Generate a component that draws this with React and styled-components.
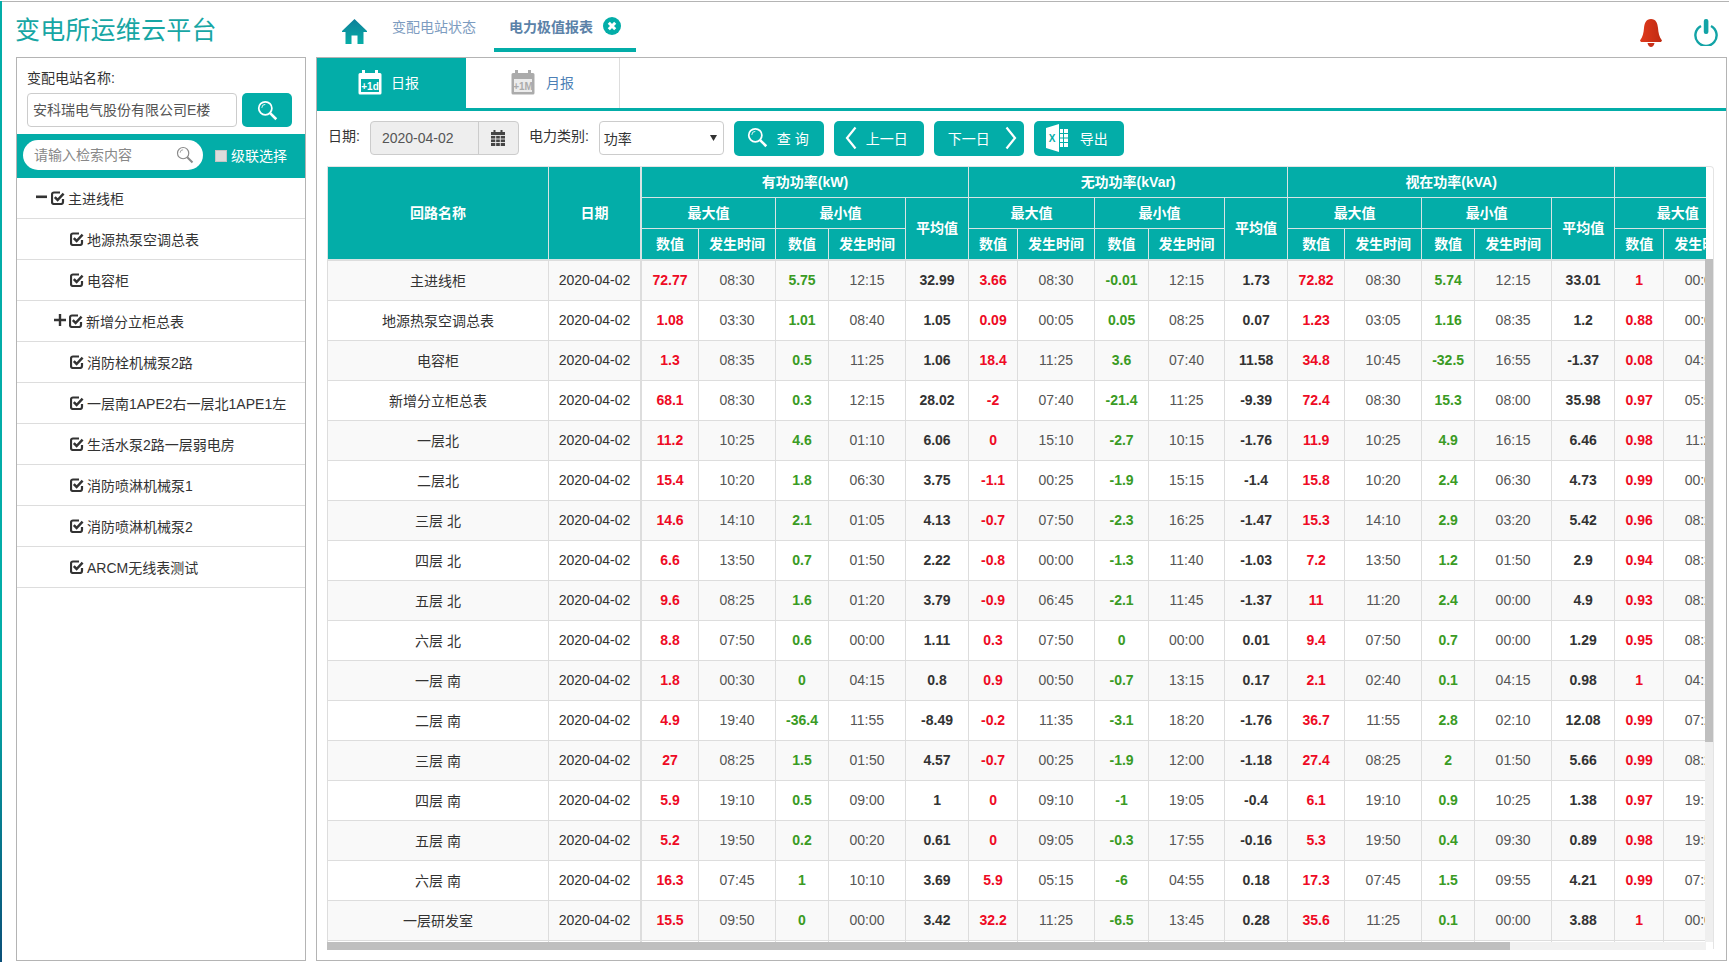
import React from 'react';
import styled, { createGlobalStyle } from 'styled-components';

const TEAL = '#03ada8';
const LINE = '#dddddd';
const FRAME = '#b4b4b4';
const SANS = '"Liberation Sans", "Noto Sans CJK SC", sans-serif';

const Global = createGlobalStyle`
  html, body { margin: 0; padding: 0; background: #fff; overflow: hidden; }
  body { font-family: ${SANS}; font-size: 14px; color: #333; }
  * { box-sizing: border-box; }
`;

const Page = styled.div`
  width: 1729px;
  height: 962px;
  padding: 1px 0 0 0;
  display: flex;
  overflow: hidden;
`;
const Edge = styled.div`
  width: 2px;
  flex: none;
  background: linear-gradient(#03ada8 0%, #03ada8 70%, #0b4f78 100%);
`;
const Shell = styled.div`
  flex: 1;
  min-width: 0;
  border-top: 1px solid ${FRAME};
  display: flex;
  flex-direction: column;
`;

const TopBar = styled.header`
  height: 55px;
  flex: none;
  display: flex;
  align-items: flex-start;
  padding-left: 13px;
  padding-right: 11px;
`;
const Title = styled.h1`
  margin: 0;
  width: 327px;
  flex: none;
  height: 52px;
  line-height: 52px;
  font-size: 25px;
  font-weight: 400;
  letter-spacing: 0.2px;
  color: #17a6a4;
  font-family: "Noto Sans CJK SC", sans-serif;
`;
const HomeLink = styled.a`
  display: block;
  width: 25px;
  height: 25px;
  margin-top: 17px;
  flex: none;
`;
const NavTab = styled.div`
  height: 50px;
  padding: 2px 15px 0;
  margin-left: ${p => p.$ml || 0}px;
  border-bottom: 4px solid ${p => (p.$active ? TEAL : 'transparent')};
  display: flex;
  align-items: center;
  gap: 10px;
  font-size: 14px;
  white-space: nowrap;
  font-weight: ${p => (p.$active ? 700 : 400)};
  color: ${p => (p.$active ? '#5b82a8' : '#7d9cc0')};
  font-family: "Noto Sans CJK SC", sans-serif;
`;
const HeadIcons = styled.div`
  margin-left: auto;
  display: flex;
  align-items: flex-start;
  gap: 32px;
  padding-top: 17px;
`;

const Body = styled.main`
  flex: none;
  height: 904px;
  display: flex;
  gap: 10px;
  padding-left: 14px;
`;

const SidePanel = styled.aside`
  width: 290px;
  flex: none;
  border: 1px solid ${FRAME};
  display: flex;
  flex-direction: column;
`;
const StationBox = styled.div`
  height: 76px;
  flex: none;
  padding: 10px 10px 0;
`;
const FieldLabel = styled.div`
  height: 22px;
  line-height: 20px;
  font-size: 14px;
  color: #333;
  white-space: nowrap;
`;
const StationRow = styled.div`
  display: flex;
  gap: 5px;
  margin-top: 3px;
`;
const TextInput = styled.input`
  width: 210px;
  height: 34px;
  border: 1px solid #ccc;
  border-radius: 4px;
  padding: 0 5px 3px;
  font: 14px ${SANS};
  color: #555;
  background: #fff;
  outline: none;
`;
const IconButton = styled.button`
  width: 50px;
  height: 34px;
  border: 0;
  border-radius: 5px;
  background: ${TEAL};
  display: flex;
  align-items: center;
  justify-content: center;
  padding: 0;
`;
const FilterStrip = styled.div`
  height: 44px;
  flex: none;
  background: ${TEAL};
  display: flex;
  align-items: center;
  padding: 0 0 2px 6px;
`;
const SearchPill = styled.div`
  width: 180px;
  height: 30px;
  border-radius: 15px;
  background: #fff;
  display: flex;
  align-items: center;
  padding: 0 9px 0 9px;
`;
const PillInput = styled.input`
  flex: 1;
  min-width: 0;
  border: 0;
  outline: none;
  background: transparent;
  font: 14px ${SANS};
  color: #555;
  &::placeholder { color: #888; opacity: 1; }
`;
const CascadeLabel = styled.label`
  margin-left: 12px;
  display: flex;
  align-items: center;
  gap: 4px;
  color: #fff;
  font-size: 14px;
  white-space: nowrap;
`;
const GreyBox = styled.span`
  width: 12px;
  height: 12px;
  background: #dcdcdc;
  border: 1px solid #c4c4c4;
  display: block;
  margin-top: 2px;
`;
const TreeList = styled.ul`
  list-style: none;
  margin: 0;
  padding: 0;
`;
const TreeRow = styled.li`
  height: 41px;
  border-bottom: 1px solid ${LINE};
  display: flex;
  align-items: center;
  padding-left: ${p => p.$indent}px;
  gap: 3px;
  font-size: 14px;
  color: #333;
  white-space: nowrap;
`;
const Toggle = styled.span`
  width: 12px;
  display: block;
  flex: none;
`;

const MainPanel = styled.section`
  width: 1411px;
  flex: none;
  border: 1px solid ${FRAME};
`;
const ReportTabs = styled.div`
  height: 53px;
  display: flex;
  border-bottom: 3px solid ${TEAL};
`;
const ReportTab = styled.div`
  width: ${p => p.$w}px;
  display: flex;
  align-items: center;
  gap: ${p => (p.$active ? 9 : 11)}px;
  padding: 0 0 2px ${p => p.$pad}px;
  font-size: 14px;
  background: ${p => (p.$active ? TEAL : '#fff')};
  color: ${p => (p.$active ? '#fff' : '#4c7fb5')};
  border-right: ${p => (p.$active ? '0' : `1px solid ${LINE}`)};
`;
const Toolbar = styled.div`
  display: flex;
  align-items: flex-start;
  margin: 10px 0 0 11px;
  height: 35px;
  gap: 10px;
`;
const ToolLabel = styled.span`
  line-height: 31px;
  font-size: 14px;
  color: #333;
  white-space: nowrap;
`;
const DateGroup = styled.div`
  width: 149px;
  height: 34px;
  display: flex;
  border: 1px solid #ccc;
  border-radius: 4px;
  background: #eee;
  overflow: hidden;
`;
const DateValue = styled.div`
  width: 108px;
  line-height: 32px;
  padding-left: 11px;
  color: #555;
  border-right: 1px solid #ccc;
`;
const DateAddon = styled.div`
  flex: 1;
  display: flex;
  align-items: center;
  justify-content: center;
`;
const SelectBox = styled.div`
  width: 125px;
  height: 34px;
  border: 1px solid #ccc;
  border-radius: 4px;
  padding: 0 6px 0 4px;
  display: flex;
  align-items: center;
  justify-content: space-between;
  color: #333;
  background: #fff;
`;
const ActionButton = styled.button`
  width: 90px;
  height: 35px;
  border: 0;
  border-radius: 5px;
  background: ${TEAL};
  color: #fff;
  font: 14px ${SANS};
  padding: 0 0 2px ${p => p.$pl || 0}px;
  display: flex;
  align-items: center;
  gap: ${p => p.$gap || 8}px;
  letter-spacing: ${p => p.$track || 0}px;
  white-space: nowrap;
`;

const TableFrame = styled.div`
  position: relative;
  width: 1387px;
  height: 783px;
  margin: 10px 0 0 10px;
  border: 1px solid #e4e4e4;
  border-left: 0;
  border-bottom: 0;
  border-radius: 0 4px 0 0;
`;
const TableClip = styled.div`
  width: 1379px;
  height: 775px;
  overflow: hidden;
  display: flex;
  align-items: flex-start;
`;
const GridTable = styled.table`
  border-collapse: collapse;
  table-layout: fixed;
  flex: none;
  width: ${p => p.$w}px;
`;
const Col = styled.col`
  width: ${p => p.$w}px;
`;
const Th = styled.th`
  height: ${p => p.$h || 31}px;
  padding: 0 0 2px;
  background: ${TEAL};
  color: #fff;
  font-size: 14px;
  font-weight: 700;
  text-align: center;
  border: 1px solid #d8e4e4;
  border-top: 0;
  overflow: hidden;
  white-space: nowrap;
`;
const Tr = styled.tr`
  background: ${p => (p.$odd ? '#f9f9f9' : '#fff')};
`;
const Td = styled.td`
  height: 40px;
  padding: 0;
  text-align: center;
  border: 1px solid ${LINE};
  font-size: 14px;
  white-space: nowrap;
  overflow: hidden;
  color: ${p => (p.$tone === 'max' ? '#ee0a24' : p.$tone === 'min' ? '#3a9b24' : p.$tone === 'time' ? '#555' : '#333')};
  font-weight: ${p => (p.$tone && p.$tone !== 'time' ? 700 : 400)};
`;
const HeadDivider = styled.tr`
  background: #ddd;
`;
const DividerCell = styled.td`
  height: ${p => p.$h}px;
  padding: 0;
  border: 0;
`;
const VTrack = styled.div`
  position: absolute;
  right: 0;
  top: 92px;
  width: 8px;
  height: 683px;
  background: #efefef;
`;
const VThumb = styled.div`
  height: 483px;
  background: #bfbfbf;
`;
const HTrack = styled.div`
  position: absolute;
  left: 0;
  top: 775px;
  width: 1379px;
  height: 8px;
  background: #f1f1f1;
`;
const HThumb = styled.div`
  width: 1183px;
  height: 8px;
  background: #bfbfbf;
`;

const names = ['主进线柜','地源热泵空调总表','电容柜','新增分立柜总表','一层北','二层北','三层 北','四层 北','五层 北','六层 北','一层 南','二层 南','三层 南','四层 南','五层 南','六层 南','一层研发室'];

const rows = [
  '72.77 08:30 5.75 12:15 32.99 3.66 08:30 -0.01 12:15 1.73 72.82 08:30 5.74 12:15 33.01 1 00:00',
  '1.08 03:30 1.01 08:40 1.05 0.09 00:05 0.05 08:25 0.07 1.23 03:05 1.16 08:35 1.2 0.88 00:00',
  '1.3 08:35 0.5 11:25 1.06 18.4 11:25 3.6 07:40 11.58 34.8 10:45 -32.5 16:55 -1.37 0.08 04:50',
  '68.1 08:30 0.3 12:15 28.02 -2 07:40 -21.4 11:25 -9.39 72.4 08:30 15.3 08:00 35.98 0.97 05:50',
  '11.2 10:25 4.6 01:10 6.06 0 15:10 -2.7 10:15 -1.76 11.9 10:25 4.9 16:15 6.46 0.98 11:20',
  '15.4 10:20 1.8 06:30 3.75 -1.1 00:25 -1.9 15:15 -1.4 15.8 10:20 2.4 06:30 4.73 0.99 00:00',
  '14.6 14:10 2.1 01:05 4.13 -0.7 07:50 -2.3 16:25 -1.47 15.3 14:10 2.9 03:20 5.42 0.96 08:20',
  '6.6 13:50 0.7 01:50 2.22 -0.8 00:00 -1.3 11:40 -1.03 7.2 13:50 1.2 01:50 2.9 0.94 08:30',
  '9.6 08:25 1.6 01:20 3.79 -0.9 06:45 -2.1 11:45 -1.37 11 11:20 2.4 00:00 4.9 0.93 08:20',
  '8.8 07:50 0.6 00:00 1.11 0.3 07:50 0 00:00 0.01 9.4 07:50 0.7 00:00 1.29 0.95 08:30',
  '1.8 00:30 0 04:15 0.8 0.9 00:50 -0.7 13:15 0.17 2.1 02:40 0.1 04:15 0.98 1 04:10',
  '4.9 19:40 -36.4 11:55 -8.49 -0.2 11:35 -3.1 18:20 -1.76 36.7 11:55 2.8 02:10 12.08 0.99 07:20',
  '27 08:25 1.5 01:50 4.57 -0.7 00:25 -1.9 12:00 -1.18 27.4 08:25 2 01:50 5.66 0.99 08:20',
  '5.9 19:10 0.5 09:00 1 0 09:10 -1 19:05 -0.4 6.1 19:10 0.9 10:25 1.38 0.97 19:10',
  '5.2 19:50 0.2 00:20 0.61 0 09:05 -0.3 17:55 -0.16 5.3 19:50 0.4 09:30 0.89 0.98 19:50',
  '16.3 07:45 1 10:10 3.69 5.9 05:15 -6 04:55 0.18 17.3 07:45 1.5 09:55 4.21 0.99 07:50',
  '15.5 09:50 0 00:00 3.42 32.2 11:25 -6.5 13:45 0.28 35.6 11:25 0.1 00:00 3.88 1 00:00',
].map(r => r.split(' '));

const tones = ['max','time','min','time','avg'];
const dataCols = [57,77,53,77,63, 49,77,54,76,63, 57,77,53,77,63, 49,77];
const dataWidth = dataCols.reduce((a, b) => a + b, 0);

const groups = [
  { label: '有功功率(kW)' },
  { label: '无功功率(kVar)' },
  { label: '视在功率(kVA)' },
];

const Chevron = ({ left }) => (
  <svg width="12" height="24" viewBox="0 0 12 24" fill="none" stroke="#fff" strokeWidth="2.2">
    <path d={left ? 'M10.5 1.5 L2 12 L10.5 22.5' : 'M1.5 1.5 L10 12 L1.5 22.5'} />
  </svg>
);
const Magnifier = ({ size = 24, color = '#fff', w = 2 }) => (
  <svg width={size} height={size} viewBox="0 0 24 24" fill="none" stroke={color}>
    <circle cx="9.5" cy="9.5" r="7.5" strokeWidth={w} />
    <path d="M5.5 9 a4 4 0 0 1 4-4" strokeWidth="1" />
    <path d="M15 15 L22 22" strokeWidth={w + 1} />
  </svg>
);
const CheckMark = () => (
  <svg width="14" height="14" viewBox="0 0 14 14" fill="none" style={{ flex: 'none' }}>
    <path d="M12 8 V11 a2 2 0 0 1 -2 2 H3 a2 2 0 0 1 -2 -2 V3.5 a2 2 0 0 1 2 -2 H9" stroke="#333" strokeWidth="2.2" />
    <path d="M3.8 6.2 L6.6 9 L12.6 2.6" stroke="#333" strokeWidth="2.5" />
  </svg>
);
const CalendarBadge = ({ color, ink, label }) => (
  <svg width="24" height="26" viewBox="0 0 24 26">
    <path fill={color} d="M2 4 H4 V1 H7 V4 H17 V1 H20 V4 H22 a1.5 1.5 0 0 1 1.5 1.5 V24 a1.5 1.5 0 0 1 -1.5 1.5 H2 a1.5 1.5 0 0 1 -1.5 -1.5 V5.5 A1.5 1.5 0 0 1 2 4 Z" />
    <rect x="3" y="10" width="18" height="13" fill={ink} />
    <text x="12" y="21" textAnchor="middle" fontFamily={SANS} fontSize="10" fontWeight="700" fill={color}>{label}</text>
  </svg>
);
const ExcelIcon = () => (
  <svg width="22" height="28" viewBox="0 0 22 28">
    <path fill="#fff" d="M0 4 L13 0 V28 L0 24 Z" />
    <text x="6" y="18" textAnchor="middle" fontFamily={SANS} fontSize="10" fontWeight="700" fill={TEAL}>X</text>
    <path fill="#fff" d="M14 5 H22 V23 H14 Z" />
    <path stroke={TEAL} strokeWidth="1" d="M17.5 5 V23 M14 9.5 H22 M14 14 H22 M14 18.5 H22" />
  </svg>
);

const App = () => (
  <Page>
    <Global />
    <Edge />
    <Shell>
      <TopBar>
        <Title>变电所运维云平台</Title>
        <HomeLink>
          <svg width="25" height="25" viewBox="0 0 25 25">
            <defs>
              <linearGradient id="homeFill" x1="0" y1="0" x2="0" y2="1">
                <stop offset="0" stopColor="#0f7f9a" />
                <stop offset="1" stopColor="#06ada6" />
              </linearGradient>
            </defs>
            <path fill="url(#homeFill)" d="M12.5 0 L25 12 L25 13 L21.5 13 V25 H15.5 V16.5 H9.5 V25 H3.5 V13 H0 V12 Z" />
          </svg>
        </HomeLink>
        <NavTab $ml={10}>变配电站状态</NavTab>
        <NavTab $active $ml={3}>
          电力极值报表
          <svg width="18" height="18" viewBox="0 0 18 18">
            <circle cx="9" cy="9" r="9" fill={TEAL} />
            <path d="M5.8 5.8 L12.2 12.2 M12.2 5.8 L5.8 12.2" stroke="#fff" strokeWidth="3" />
          </svg>
        </NavTab>
        <HeadIcons>
          <svg width="22" height="28" viewBox="0 0 22 28">
            <defs>
              <linearGradient id="bellFill" x1="0" y1="0" x2="1" y2="0">
                <stop offset="0" stopColor="#e03a1c" />
                <stop offset="1" stopColor="#bf2a12" />
              </linearGradient>
            </defs>
            <path fill="url(#bellFill)" d="M11 0 C6 0 4.5 4 4 9 C3.6 14 2.8 18 0 21.5 L1 23 H21 L22 21.5 C19.2 18 18.4 14 18 9 C17.5 4 16 0 11 0 Z" />
            <path fill="#c9301a" d="M7.5 24 H14.5 C14 26.5 12.5 28 11 28 C9.5 28 8 26.5 7.5 24 Z" />
          </svg>
          <svg width="24" height="27" viewBox="0 0 24 27" fill="none">
            <path d="M7 7 A10.6 10.6 0 1 0 17 7" stroke="#12a3a6" strokeWidth="2.4" />
            <rect x="9.8" y="0" width="4.6" height="15" rx="2" fill="#12a3a6" />
          </svg>
        </HeadIcons>
      </TopBar>
      <Body>
        <SidePanel>
          <StationBox>
            <FieldLabel>变配电站名称:</FieldLabel>
            <StationRow>
              <TextInput readOnly value="安科瑞电气股份有限公司E楼" />
              <IconButton><Magnifier size={21} /></IconButton>
            </StationRow>
          </StationBox>
          <FilterStrip>
            <SearchPill>
              <PillInput placeholder="请输入检索内容" />
              <Magnifier size={18} color="#8a8a8a" w={1.6} />
            </SearchPill>
            <CascadeLabel><GreyBox />级联选择</CascadeLabel>
          </FilterStrip>
          <TreeList>
            <TreeRow $indent={19}>
              <Toggle><svg width="12" height="12" viewBox="0 0 12 12"><rect y="4.5" width="11" height="2.6" fill="#333" /></svg></Toggle>
              <CheckMark />主进线柜
            </TreeRow>
            <TreeRow $indent={53}><CheckMark />地源热泵空调总表</TreeRow>
            <TreeRow $indent={53}><CheckMark />电容柜</TreeRow>
            <TreeRow $indent={37}>
              <Toggle><svg width="12" height="12" viewBox="0 0 12 12"><path d="M0 4.8 H4.8 V0 H7.2 V4.8 H12 V7.2 H7.2 V12 H4.8 V7.2 H0 Z" fill="#333" /></svg></Toggle>
              <CheckMark />新增分立柜总表
            </TreeRow>
            {['消防栓机械泵2路','一层南1APE2右一层北1APE1左','生活水泵2路一层弱电房','消防喷淋机械泵1','消防喷淋机械泵2','ARCM无线表测试'].map(t => (
              <TreeRow key={t} $indent={53}><CheckMark />{t}</TreeRow>
            ))}
          </TreeList>
        </SidePanel>
        <MainPanel>
          <ReportTabs>
            <ReportTab $active $w={149} $pad={41}>
              <CalendarBadge color="#fff" ink={TEAL} label="+1d" />日报
            </ReportTab>
            <ReportTab $w={154} $pad={45}>
              <CalendarBadge color="#ababab" ink="#ececec" label="+1M" />月报
            </ReportTab>
          </ReportTabs>
          <Toolbar>
            <ToolLabel>日期:</ToolLabel>
            <DateGroup>
              <DateValue>2020-04-02</DateValue>
              <DateAddon>
                <svg width="14" height="16" viewBox="0 0 14 16">
                  <path fill="#444" d="M0 2 H2.5 V0 H4.5 V2 H9.5 V0 H11.5 V2 H14 V16 H0 Z" />
                  <path stroke="#eee" strokeWidth="0.9" d="M0 5.5 H14 M0 9 H14 M0 12.5 H14 M4.7 5.5 V16 M9.3 5.5 V16" />
                </svg>
              </DateAddon>
            </DateGroup>
            <ToolLabel>电力类别:</ToolLabel>
            <SelectBox>
              功率
              <svg width="7" height="6" viewBox="0 0 7 6"><path d="M0 0 H7 L3.5 6 Z" fill="#333" /></svg>
            </SelectBox>
            <ActionButton $pl={13} $gap={9} $track={4}><Magnifier size={21} />查询</ActionButton>
            <ActionButton $pl={11} $gap={9}><Chevron left />上一日</ActionButton>
            <ActionButton $pl={14} $gap={15}>下一日<Chevron /></ActionButton>
            <ActionButton $pl={12} $gap={12}><ExcelIcon />导出</ActionButton>
          </Toolbar>
          <TableFrame>
            <TableClip>
              <GridTable $w={313}>
                <colgroup><Col $w={221} /><Col $w={92} /></colgroup>
                <thead>
                  <tr>
                    <Th $h={92}>回路名称</Th>
                    <Th $h={92}>日期</Th>
                  </tr>
                  <HeadDivider><DividerCell colSpan={2} $h={1} /></HeadDivider>
                </thead>
                <tbody>
                  {names.map((n, i) => (
                    <Tr key={i} $odd={i % 2 === 0}>
                      <Td>{n}</Td>
                      <Td>2020-04-02</Td>
                    </Tr>
                  ))}
                  <Tr><Td /><Td /></Tr>
                </tbody>
              </GridTable>
              <GridTable $w={dataWidth + 224}>
                <colgroup>
                  {dataCols.map((w, i) => <Col key={i} $w={w} />)}
                  <Col $w={224} />
                </colgroup>
                <thead>
                  <tr>
                    {groups.map(g => <Th key={g.label} colSpan={5} $h={30}>{g.label}</Th>)}
                    <Th colSpan={3} $h={30}>功率因数</Th>
                  </tr>
                  <tr>
                    {groups.map(g => (
                      <React.Fragment key={g.label}>
                        <Th colSpan={2}>最大值</Th>
                        <Th colSpan={2}>最小值</Th>
                        <Th rowSpan={2}>平均值</Th>
                      </React.Fragment>
                    ))}
                    <Th colSpan={2}>最大值</Th>
                    <Th>最小值</Th>
                  </tr>
                  <tr>
                    {groups.map(g => (
                      <React.Fragment key={g.label}>
                        <Th>数值</Th><Th>发生时间</Th><Th>数值</Th><Th>发生时间</Th>
                      </React.Fragment>
                    ))}
                    <Th>数值</Th><Th>发生时间</Th><Th>数值</Th>
                  </tr>
                  <HeadDivider><DividerCell colSpan={18} $h={1} /></HeadDivider>
                </thead>
                <tbody>
                  {rows.map((r, i) => (
                    <Tr key={i} $odd={i % 2 === 0}>
                      {r.map((v, j) => (
                        <Td key={j} $tone={j === 15 ? 'max' : j === 16 ? 'time' : tones[j % 5]}>{v}</Td>
                      ))}
                      <Td />
                    </Tr>
                  ))}
                  <Tr>
                    {dataCols.map((_, j) => <Td key={j} />)}
                    <Td />
                  </Tr>
                </tbody>
              </GridTable>
            </TableClip>
            <VTrack><VThumb /></VTrack>
            <HTrack><HThumb /></HTrack>
          </TableFrame>
        </MainPanel>
      </Body>
    </Shell>
  </Page>
);

export default App;
